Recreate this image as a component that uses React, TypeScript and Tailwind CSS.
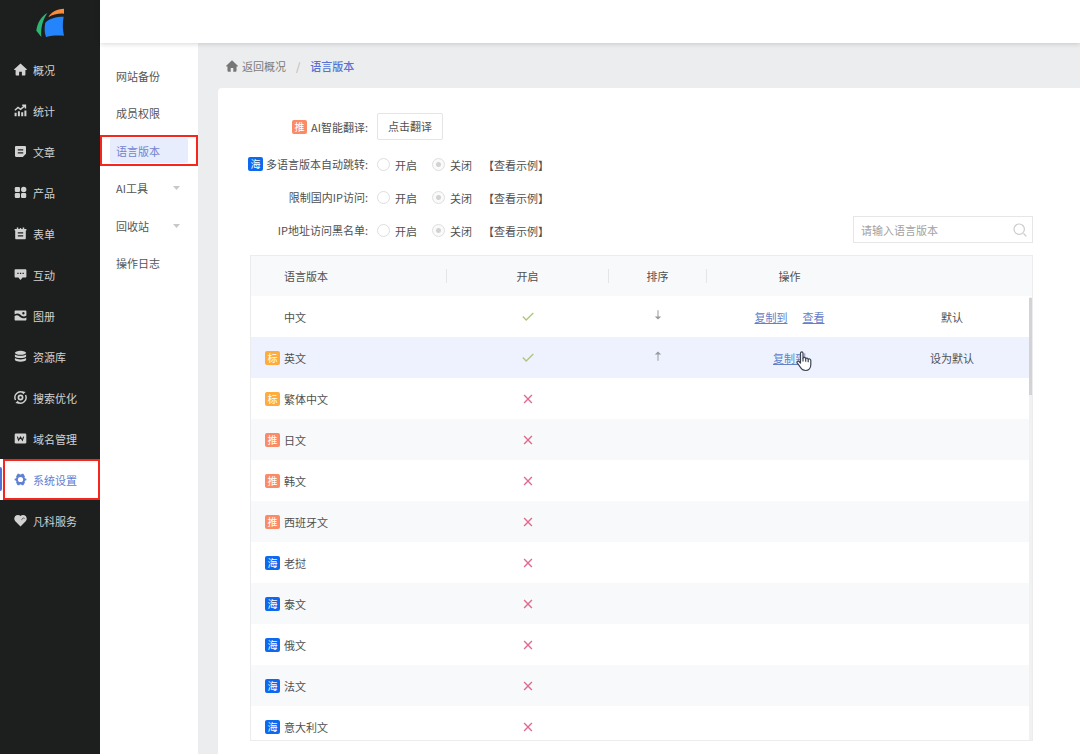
import type { ReactNode } from 'react';
import clsx from 'clsx';

type BadgeKind = 'recommend' | 'standard' | 'overseas';

type Language = {
  name: string;
  badge?: BadgeKind;
  enabled: boolean;
  order?: 'up' | 'down';
  actions?: string[];
  status?: string;
  hovered?: boolean;
};

const badges: Record<BadgeKind, { text: string; className: string }> = {
  recommend: { text: '推', className: 'bg-[#fb8a66]' },
  standard: { text: '标', className: 'bg-[#ffab3d]' },
  overseas: { text: '海', className: 'bg-[#0d6af0]' },
};

const languages: Language[] = [
  { name: '中文', enabled: true, order: 'down', actions: ['复制到', '查看'], status: '默认' },
  { name: '英文', badge: 'standard', enabled: true, order: 'up', actions: ['复制到'], status: '设为默认', hovered: true },
  { name: '繁体中文', badge: 'standard', enabled: false },
  { name: '日文', badge: 'recommend', enabled: false },
  { name: '韩文', badge: 'recommend', enabled: false },
  { name: '西班牙文', badge: 'recommend', enabled: false },
  { name: '老挝', badge: 'overseas', enabled: false },
  { name: '泰文', badge: 'overseas', enabled: false },
  { name: '俄文', badge: 'overseas', enabled: false },
  { name: '法文', badge: 'overseas', enabled: false },
  { name: '意大利文', badge: 'overseas', enabled: false },
];

const switches: { id: string; label: string; badge?: BadgeKind }[] = [
  { id: 'redirect', label: '多语言版本自动跳转:', badge: 'overseas' },
  { id: 'domestic-ip', label: '限制国内IP访问:' },
  { id: 'ip-blacklist', label: 'IP地址访问黑名单:' },
];

const subMenu = [
  { label: '网站备份' },
  { label: '成员权限' },
  { label: '语言版本', active: true },
  { label: 'AI工具', expandable: true },
  { label: '回收站', expandable: true },
  { label: '操作日志' },
];

function HomeIcon() {
  return <path d="M6.5.4.2 6.2c-.3.3-.1.8.3.8h1.1v4.6c0 .6.4 1 1 1h2.5V8.8h2.8v3.800h2.500c.6 0 1-.4 1-1V7h1.100c.4 0 .6-.5.3-.8L6.500.4Z" />;
}

const mainMenu: { label: string; icon: ReactNode; active?: boolean }[] = [
  { label: '概况', icon: <HomeIcon /> },
  {
    label: '统计',
    icon: (
      <>
        <path d="M.9 6.2 4 3.5l2.6 1.9 4.6-4M8.2 1.2h3.2v3.2" fill="none" stroke="currentColor" strokeWidth="1.5" />
        <path d="M.6 8.8h2v3.4h-2zM3.9 7.2h2v5h-2zM7.2 8.2h2v4h-2zM10.4 6.4h2v5.8h-2z" />
      </>
    ),
  },
  {
    label: '文章',
    icon: (
      <path
        fillRule="evenodd"
        d="M2.2 1h8.6c.7 0 1.2.5 1.2 1.2v6.6L8.8 12H2.2C1.5 12 1 11.5 1 10.8V2.2C1 1.5 1.5 1 2.2 1Zm1.6 3.2v1.3h5.4V4.2H3.8Zm0 3v1.3h5.4V7.2H3.8Z"
      />
    ),
  },
  {
    label: '产品',
    icon: (
      <>
        <rect x=".8" y="1" width="5.2" height="5" rx="1.2" />
        <circle cx="9.7" cy="3.5" r="2.7" />
        <rect x=".8" y="7" width="5.2" height="5" rx="1.2" />
        <rect x="7" y="7" width="5.2" height="5" rx="1.2" />
      </>
    ),
  },
  {
    label: '表单',
    icon: (
      <path
        fillRule="evenodd"
        d="M.6 2h2.200V.6h1.500V2h1.500V.9h1.400V2h1.500V.6h1.500V2h2.200v1.600h-.6v7.600c0 .6-.4 1-1 1H2.200c-.6 0-1-.4-1-1V3.600H.6V2Zm3.200 3.200v1.200h5.400V5.200H3.800Zm0 3v1.200h5.400V8.200H3.800Z"
      />
    ),
  },
  {
    label: '互动',
    icon: (
      <path
        fillRule="evenodd"
        d="M1.600 1.200h9.800c.6 0 1 .4 1 1v6.400c0 .6-.4 1-1 1H8.600l-2.100 2.400-2.100-2.400H1.600c-.6 0-1-.4-1-1V2.200c0-.6.4-1 1-1Zm1.700 3.600v1.300h1.300V4.800H3.300Zm2.600 0v1.300h1.300V4.800H5.900Zm2.600 0v1.300h1.300V4.800H8.500Z"
      />
    ),
  },
  {
    label: '图册',
    icon: (
      <>
        <path
          fillRule="evenodd"
          d="M1.600 1.500h9.800c.6 0 1 .4 1 1v4C9.900 8.400 8.100 7.200 6.500 5.800 4.700 4.300 3 4.100.6 5.200V2.500c0-.6.4-1 1-1Zm7.800 1.600a1.200 1.200 0 1 0 0 2.400 1.200 1.200 0 0 0 0-2.400Z"
        />
        <path d="M.6 6.900c2-1.100 3.300-.8 4.900.6 2 1.700 4.200 2.600 6.900.9v2.100c0 .6-.4 1-1 1H1.600c-.6 0-1-.4-1-1V6.900Z" />
      </>
    ),
  },
  {
    label: '资源库',
    icon: (
      <>
        <ellipse cx="6.5" cy="2.8" rx="5.6" ry="2" />
        <path d="M.9 4.400c1.800 1.700 9.400 1.700 11.200 0v2.300c-1.500 1.800-9.700 1.800-11.200 0V4.400Z" />
        <path d="M.9 8.100c1.800 1.700 9.400 1.700 11.200 0V10c-1.500 2.200-9.700 2.200-11.200 0V8.100Z" />
      </>
    ),
  },
  {
    label: '搜索优化',
    icon: (
      <>
        <path d="M9 1.500A5.600 5.600 0 0 0 1.500 9M4 11.500A5.600 5.600 0 0 0 11.500 4" fill="none" stroke="currentColor" strokeWidth="1.4" />
        <path d="M8 .2 11.600 1 9 3.600zM5 12.800 1.400 12 4 9.400z" />
        <circle cx="6.5" cy="6.500" r="2.100" fill="none" stroke="currentColor" strokeWidth="1.700" />
      </>
    ),
  },
  {
    label: '域名管理',
    icon: (
      <>
        <rect x=".7" y="1.5" width="11.6" height="10" rx="1.2" />
        <path d="m3.400 4.600 1.200 3.600 1.900-3.200 1.900 3.200 1.200-3.600" fill="none" stroke="#1d1f1f" strokeWidth="1.100" />
      </>
    ),
  },
  {
    label: '系统设置',
    active: true,
    icon: (
      <path
        fillRule="evenodd"
        d="M3.600.8h1.600l.6.8h1.400l.6-.8h1.600l1.500 2.600-.4 1 .7 1.200 1.200.2v1.400l-1.200.2-.7 1.200.4 1-1.500 2.600H7.800l-.6-.8H5.800l-.6.8H3.600L2.100 9.600l.4-1-.7-1.200L.6 7.200V5.800l1.200-.2.7-1.200-.4-1L3.600.8Zm2.900 3.100a2.600 2.600 0 1 0 0 5.200 2.600 2.600 0 0 0 0-5.200Z"
      />
    ),
  },
  {
    label: '凡科服务',
    icon: (
      <>
        <path d="M6.500 12.400 1.300 7.200C-1.100 4.500 1.100 1 3.900 1c1.100 0 2 .4 2.600 1.100C7.100 1.400 8 1 9.100 1c2.800 0 5 3.500 2.600 6.200l-5.200 5.200Z" />
        <path d="M7.400 5.800 9 4.300c.6-.5 1.300-.3 1.600.3" fill="none" stroke="#1d1f1f" strokeWidth=".7" />
      </>
    ),
  },
];

function Badge({ kind }: { kind: BadgeKind }) {
  return (
    <span
      className={clsx(
        'flex h-[14px] w-[15px] shrink-0 items-center justify-center rounded-[2px] text-[10px] leading-none text-white',
        badges[kind].className,
      )}
    >
      {badges[kind].text}
    </span>
  );
}

function Logo() {
  return (
    <svg width="29" height="30" viewBox="75 22 87 90" role="img" aria-label="logo">
      <path d="M109 37C88 49 79 69 76 90l15 19c-2-24 2-48 18-72Z" fill="#2fb573" />
      <path d="M112 50c7-15 25-25 47-26v15c-18-1-33 2-47 11Z" fill="#f98b3c" />
      <path d="M103 66c12-13 32-18 55-18-4 19-3 39 1 57-18-1-36-1-54 4-5-14-5-29-2-43Z" fill="#2484fb" />
    </svg>
  );
}

function Sidebar() {
  return (
    <aside className="w-[100px] shrink-0 bg-[#1d1f1f]">
      <div className="flex h-[49px] items-start justify-center pt-2">
        <Logo />
      </div>
      <nav>
        {mainMenu.map(({ label, icon, active }) => (
          <a
            key={label}
            href="#"
            className={clsx(
              'relative flex h-[41px] items-center gap-[6px] pl-[14px]',
              active ? 'bg-white text-[#6180d2]' : 'text-[#d2d2d2]',
            )}
          >
            {active && (
              <>
                <span className="absolute top-2 left-0 h-6 w-[2px] rounded-r-[2px] bg-[#5471d8]" />
                <span className="absolute inset-y-0 right-0 left-[3px] border-2 border-[#f5261c]" />
              </>
            )}
            <svg width="13" height="13" viewBox="0 0 13 13" fill="currentColor" aria-hidden="true">
              {icon}
            </svg>
            {label}
          </a>
        ))}
      </nav>
    </aside>
  );
}

function SubMenu() {
  return (
    <nav className="w-[98px] shrink-0 bg-white pt-[17px]">
      <div className="flex h-[219px] flex-col justify-between">
        {subMenu.map(({ label, active, expandable }) => (
          <a
            key={label}
            href="#"
            className={clsx(
              'relative flex h-[31px] items-center px-[10px]',
              active ? 'text-[#7284cf]' : 'text-[#555]',
            )}
          >
            <span
              className={clsx(
                'flex h-[25px] flex-1 items-center justify-between rounded-[2px] pr-2 pl-[6px]',
                active && 'bg-[#e8edfd]',
              )}
            >
              {label}
              {expandable && (
                <svg width="7" height="4" viewBox="0 0 7 4" fill="#c8c8c8" aria-hidden="true">
                  <path d="M0 0h7L3.5 4z" />
                </svg>
              )}
            </span>
            {active && <span className="absolute inset-0 border-2 border-[#f5261c]" />}
          </a>
        ))}
      </div>
    </nav>
  );
}

function RadioOption({ name, label, checked }: { name: string; label: string; checked?: boolean }) {
  return (
    <label className="flex items-center gap-[5px]">
      <input
        type="radio"
        name={name}
        defaultChecked={checked}
        className="size-[13px] appearance-none rounded-full border border-[#dedede] bg-white checked:bg-[radial-gradient(circle,#d2d2d2_2px,#fafafa_3px)]"
      />
      {label}
    </label>
  );
}

function SettingsForm() {
  return (
    <div>
      <div className="flex items-center gap-[9px]">
        <div className="flex w-[118px] items-center justify-end gap-1">
          <Badge kind="recommend" />
          AI智能翻译:
        </div>
        <button type="button" className="h-[27px] w-[66px] rounded-[2px] border border-[#e4e4e4] bg-white pb-[2px]">
          点击翻译
        </button>
      </div>
      <div className="pt-2 pb-px">
        {switches.map(({ id, label, badge }) => (
          <div key={id} role="radiogroup" aria-labelledby={id} className="flex h-[33px] items-center">
            <div id={id} className="mr-[9px] flex w-[118px] items-center justify-end gap-[3px] pb-[2px] whitespace-nowrap">
              {badge && <Badge kind={badge} />}
              {label}
            </div>
            <div className="flex gap-[15px]">
              <RadioOption name={id} label="开启" />
              <RadioOption name={id} label="关闭" checked />
            </div>
            <a href="#" className="ml-[11px]">
              【查看示例】
            </a>
          </div>
        ))}
      </div>
    </div>
  );
}

function HandCursor() {
  return (
    <svg
      className="pointer-events-none absolute top-[14px] left-1/2 ml-[6px]"
      width="17"
      height="21"
      viewBox="0 0 17 21"
      fill="#fff"
      stroke="#3c4450"
      strokeWidth="1.2"
      strokeLinejoin="round"
      aria-hidden="true"
    >
      <path d="M4.500 11.500V2.200c0-1.900 2.500-1.900 2.500 0v5c.3-1.200 2.500-1 2.700.5.500-1.100 2.400-.7 2.500.7.600-.9 2.600-.5 2.600 1.200v4c0 3.300-2 5.900-5.200 5.900-2.700 0-4.100-1.300-5.300-3.300L1.300 12c-.9-1.400.8-2.500 1.800-1.500l1.400 1.500Z" />
      <path d="M7 7v3.500M9.700 7.800v3M12.200 8.600v2.600" fill="none" />
    </svg>
  );
}

function EnabledIcon({ enabled }: { enabled: boolean }) {
  return (
    <svg
      className="mx-auto"
      width="12"
      height="10"
      viewBox="0 0 12 10"
      fill="none"
      stroke={enabled ? '#b0c67e' : '#df6c8e'}
      strokeWidth="1.4"
      role="img"
      aria-label={enabled ? '已开启' : '已关闭'}
    >
      <path d={enabled ? 'M.8 4.5 4.2 8 11.3 1' : 'M2.1 1.100l7.800 7.800M9.900 1.100 2.100 8.900'} />
    </svg>
  );
}

function OrderIcon({ order }: { order: 'up' | 'down' }) {
  return (
    <svg
      className={clsx('mx-auto -mt-1', order === 'up' && 'rotate-180')}
      width="8"
      height="10"
      viewBox="0 0 8 10"
      fill="#999"
      aria-hidden="true"
    >
      <path d="M3.500.3h1v6.200h2.700L4 9.500.8 6.500h2.700z" />
    </svg>
  );
}

function LanguageTable() {
  return (
    <div className="relative mt-[7px] min-h-0 flex-1 overflow-hidden border border-[#ececee]">
      <table className="w-full table-fixed">
        <colgroup>
          <col className="w-[196px]" />
          <col className="w-[162px]" />
          <col className="w-[98px]" />
          <col className="w-[165px]" />
          <col className="w-[160px]" />
        </colgroup>
        <thead>
          <tr className="h-10 bg-[#f8f9fb]">
            {['语言版本', '开启', '排序', '操作', ''].map((title, i) => (
              <th key={i} className="p-0 font-normal">
                <div
                  className={clsx(
                    'flex h-[14px] items-center',
                    i === 0 ? 'pl-[33px]' : 'justify-center',
                    i < 3 && 'border-r border-[#e4e5e8]',
                  )}
                >
                  {title}
                </div>
              </th>
            ))}
          </tr>
        </thead>
        <tbody>
          {languages.map(({ name, badge, enabled, order, actions, status, hovered }) => (
            <tr key={name} className={clsx('h-[41px]', hovered ? 'bg-[#edf2fe]' : 'even:bg-[#f8f9fb]')}>
              <td className="p-0">
                <div className={clsx('flex items-center gap-1', badge ? 'pl-[14px]' : 'pl-[33px]')}>
                  {badge && <Badge kind={badge} />}
                  {name}
                </div>
              </td>
              <td className="p-0">
                <EnabledIcon enabled={enabled} />
              </td>
              <td className="p-0">{order && <OrderIcon order={order} />}</td>
              <td className="relative p-0">
                <div className="flex justify-center gap-[15px]">
                  {actions?.map((action) => (
                    <a key={action} href="#" className="text-[#6580c6] underline underline-offset-1">
                      {action}
                    </a>
                  ))}
                </div>
                {hovered && <HandCursor />}
              </td>
              <td className="p-0 text-center">{status}</td>
            </tr>
          ))}
        </tbody>
      </table>
      <div className="absolute top-[41px] right-0 bottom-0 w-[3px] bg-[#f1f1f2]">
        <div className="mt-px h-[97px] bg-[#d3d3d5]" />
      </div>
    </div>
  );
}

export default function App() {
  return (
    <div className="flex h-screen bg-white font-['Noto_Sans_CJK_SC',sans-serif] text-[11px] leading-4 text-[#505050]">
      <Sidebar />
      <div className="flex min-w-0 flex-1 flex-col">
        <header className="relative h-[43px] shrink-0 bg-white shadow-[0_1px_5px_rgba(0,0,0,0.16)]" />
        <div className="flex min-h-0 flex-1">
          <SubMenu />
          <main className="flex min-w-0 flex-1 flex-col bg-[#ebedee] pl-5">
            <div className="flex h-[45px] shrink-0 items-center gap-2 pl-2 text-[#7b7b7b]">
              <a href="#" className="flex items-center gap-1">
                <svg width="12" height="12" viewBox="0 0 13 13" fill="#777" aria-hidden="true">
                  <HomeIcon />
                </svg>
                返回概况
              </a>
              <span className="px-[2px] text-[#b5b5b5]">/</span>
              <span className="font-medium text-[#5872d6]">语言版本</span>
            </div>
            <section className="flex min-h-0 flex-1 flex-col rounded-tl-[4px] bg-white pt-[25px] pr-[47px] pb-[13px] pl-8">
              <div className="flex items-end justify-between">
                <SettingsForm />
                <div className="mb-[5px] flex h-[27px] w-[180px] items-center border border-[#e6e6e6] pr-[5px] pl-[7px]">
                  <input
                    type="text"
                    aria-label="语言版本"
                    placeholder="请输入语言版本"
                    className="min-w-0 flex-1 outline-none placeholder:text-[#a2a2a2]"
                  />
                  <svg width="14" height="14" viewBox="0 0 14 14" fill="none" stroke="#cbcbcb" strokeWidth="1.2" aria-hidden="true">
                    <circle cx="6.2" cy="6.2" r="5.2" />
                    <path d="m10.500 10.500 2.900 2.900" />
                  </svg>
                </div>
              </div>
              <LanguageTable />
            </section>
          </main>
        </div>
      </div>
    </div>
  );
}
